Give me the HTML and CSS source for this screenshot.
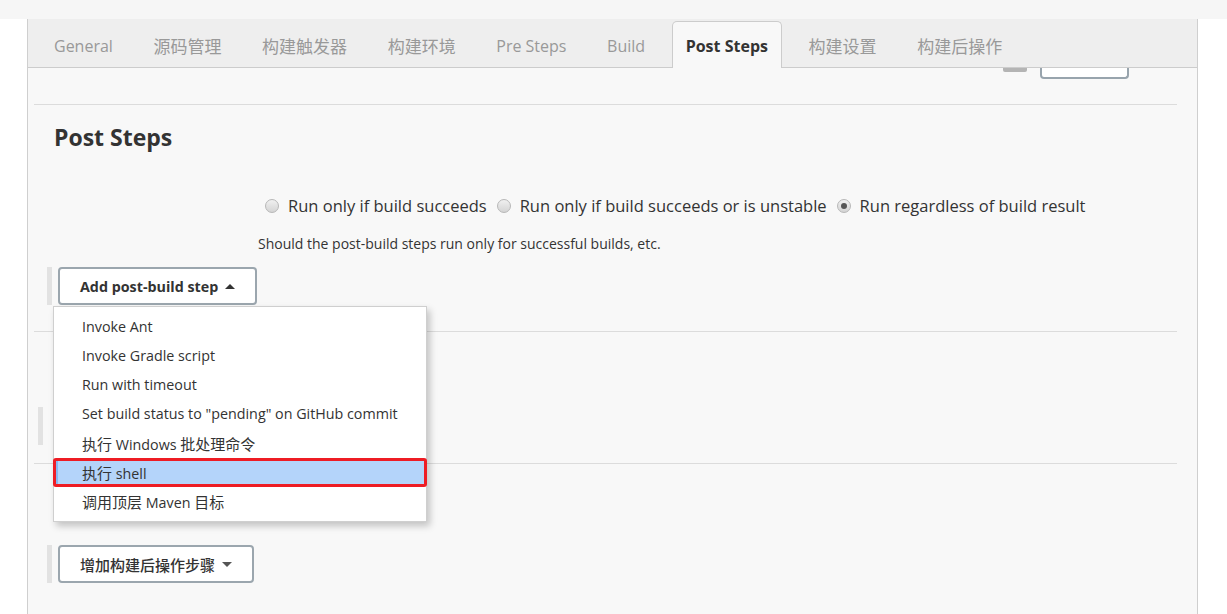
FILE: index.html
```html
<!DOCTYPE html>
<html lang="zh-CN">
<head>
<meta charset="utf-8">
<title>Post Steps</title>
<link rel="stylesheet" href="styles.css">
</head>
<body>
<div class="top-strip"></div>
<div class="wrap">
  <nav class="tabs">
    <span class="tab">General</span>
    <span class="tab zh">源码管理</span>
    <span class="tab zh">构建触发器</span>
    <span class="tab zh">构建环境</span>
    <span class="tab">Pre Steps</span>
    <span class="tab">Build</span>
    <span class="tab active">Post Steps</span>
    <span class="tab zh">构建设置</span>
    <span class="tab zh">构建后操作</span>
  </nav>
  <div class="content">
    <div class="cut-row">
      <span class="cut-grey"></span>
      <span class="cut-btn"></span>
    </div>
    <div class="rule"></div>
    <h2 class="section-title">Post Steps</h2>
    <div class="radio-row">
      <label class="radio-opt"><span class="radio"></span>Run only if build succeeds</label>
      <label class="radio-opt"><span class="radio"></span>Run only if build succeeds or is unstable</label>
      <label class="radio-opt"><span class="radio checked"></span>Run regardless of build result</label>
    </div>
    <div class="desc">Should the post-build steps run only for successful builds, etc.</div>
    <div class="btn-row">
      <span class="side-bar"></span>
      <div class="dd">
        <button class="btn">Add post-build step <span class="tri-up"></span></button>
        <ul class="menu">
          <li class="item">Invoke Ant</li>
          <li class="item">Invoke Gradle script</li>
          <li class="item">Run with timeout</li>
          <li class="item">Set build status to "pending" on GitHub commit</li>
          <li class="item"><span class="zh">执行</span> Windows <span class="zh">批处理命令</span></li>
          <li class="item selected"><span class="zh">执行</span> shell</li>
          <li class="item"><span class="zh">调用顶层</span> Maven <span class="zh">目标</span></li>
        </ul>
      </div>
    </div>
    <div class="rule r2"></div>
    <div class="hidden-row"><span class="side-bar small"></span></div>
    <div class="rule r3"></div>
    <div class="btn-row b2">
      <span class="side-bar"></span>
      <button class="btn"><span class="zh">增加构建后操作步骤</span> <span class="tri-down"></span></button>
    </div>
  </div>
</div>
</body>
</html>
```

FILE: styles.css
```css
* { box-sizing: border-box; }
html, body { margin: 0; padding: 0; }
body {
  background: #fff;
  font-family: "Open Sans", "Noto Sans CJK SC", sans-serif;
  color: #333;
  height: 614px;
  overflow: hidden;
}
.zh { font-family: "Noto Sans CJK SC", sans-serif; }
.top-strip { height: 19px; background: #f6f6f6; }
.wrap {
  margin-left: 27px;
  width: 1171px;
  height: 595px;
  border-left: 1px solid #cfcfcf;
  border-right: 1px solid #cfcfcf;
  background: #f8f8f8;
}
.tabs {
  height: 49px;
  background: #eeeeee;
  border-bottom: 1px solid #cccccc;
  display: flex;
  align-items: flex-end;
  padding-left: 12px;
  gap: 12.6px;
}
.tab {
  font-size: 16px;
  color: #999;
  padding: 0 14px;
  height: 45px;
  line-height: 49px;
  white-space: nowrap;
}
.tab.zh { font-size: 17px; line-height: 48px; }
.tab.active {
  background: #f8f8f8;
  border: 1px solid #cccccc;
  border-bottom: none;
  border-radius: 5px 5px 0 0;
  margin-bottom: -1px;
  height: 47px;
  line-height: 48px;
  color: #333;
  font-weight: bold;
  padding: 0 13px;
}
.content { position: relative; }
.cut-row {
  height: 10px;
  display: flex;
  justify-content: flex-end;
  align-items: flex-start;
  padding-right: 68px;
  gap: 13px;
}
.cut-grey {
  width: 24px; height: 4px; background: #b4b4b4; border-radius: 0 0 2px 2px;
}
.cut-btn {
  width: 89px; height: 11px;
  border: 2px solid #98a4ad; border-top: none;
  border-radius: 0 0 4px 4px;
  background: #fff;
}
.rule {
  height: 1px; background: #dcdcdc;
  margin: 26px 20px 0 6px;
}
.section-title {
  margin: 16px 0 0 26px;
  font-size: 23px;
  line-height: 32px;
  font-weight: bold;
  color: #333;
}
.radio-row {
  margin: 40px 0 0 237px;
  display: flex;
  align-items: center;
  height: 24px;
  font-size: 16.5px;
  color: #333;
  gap: 10px;
}
.radio-opt { display: flex; align-items: center; white-space: nowrap; }
.radio {
  width: 14px; height: 14px; border-radius: 50%;
  border: 1px solid #b7b7b7;
  background: linear-gradient(#f0f0f0, #d4d4d4);
  margin-right: 9px;
  margin-top: 2px;
  position: relative;
}
.radio.checked::after {
  content: ""; position: absolute; left: 3px; top: 3px;
  width: 6px; height: 6px; border-radius: 50%; background: #555;
}
.desc {
  margin: 17px 0 0 230px;
  font-size: 14px;
  line-height: 20px;
  color: #333;
}
.btn-row {
  margin-top: 13px;
  display: flex;
  align-items: stretch;
  height: 38px;
  padding-left: 19px;
}
.btn-row.b2 { margin-top: 81px; }
.side-bar { width: 5px; background: #e2e2e2; margin-right: 6px; }
.dd { position: relative; }
.btn {
  height: 38px;
  padding: 0 20px;
  border: 2px solid #9ba6ae;
  border-radius: 4px;
  background: #fff;
  font-family: inherit;
  font-size: 14.3px;
  font-weight: bold;
  color: #333;
  display: flex;
  align-items: center;
  gap: 7px;
  white-space: nowrap;
}
.b2 .btn { font-size: 15px; font-weight: 500; padding: 0 20px 0 20px; color: #333; }
.tri-up {
  width: 0; height: 0;
  border-left: 5px solid transparent; border-right: 5px solid transparent;
  border-bottom: 5px solid #333;
}
.tri-down {
  width: 0; height: 0;
  border-left: 5px solid transparent; border-right: 5px solid transparent;
  border-top: 5px solid #555;
}
.menu {
  position: absolute;
  top: 39px;
  left: -5px;
  width: 374px;
  margin: 0; padding: 5px 0 5px 0;
  list-style: none;
  background: #fff;
  border: 1px solid #cfcfcf;
  box-shadow: 3px 4px 7px rgba(0,0,0,0.22);
  z-index: 5;
}
.item {
  height: 29px;
  line-height: 29px;
  padding-left: 28px;
  font-size: 14.3px;
  color: #333;
  white-space: nowrap;
}
.item .zh { font-size: 15px; }
.item:nth-child(4) { height: 30px; }
.item.selected {
  margin: 0 -1px;
  padding-left: 26px;
  line-height: 23px;
  background: #b4d4fa;
  border: 3px solid #ee1c24;
  border-radius: 3px;
  box-shadow: inset 2px 0 0 #86b6ef;
}
.hidden-row { height: 38px; margin-top: 75px; display: flex; padding-left: 10px; }
.side-bar.small { width: 5px; margin: 0; }
.rule.r2 { margin-top: 26px; }
.rule.r3 { margin-top: 18px; }
```
